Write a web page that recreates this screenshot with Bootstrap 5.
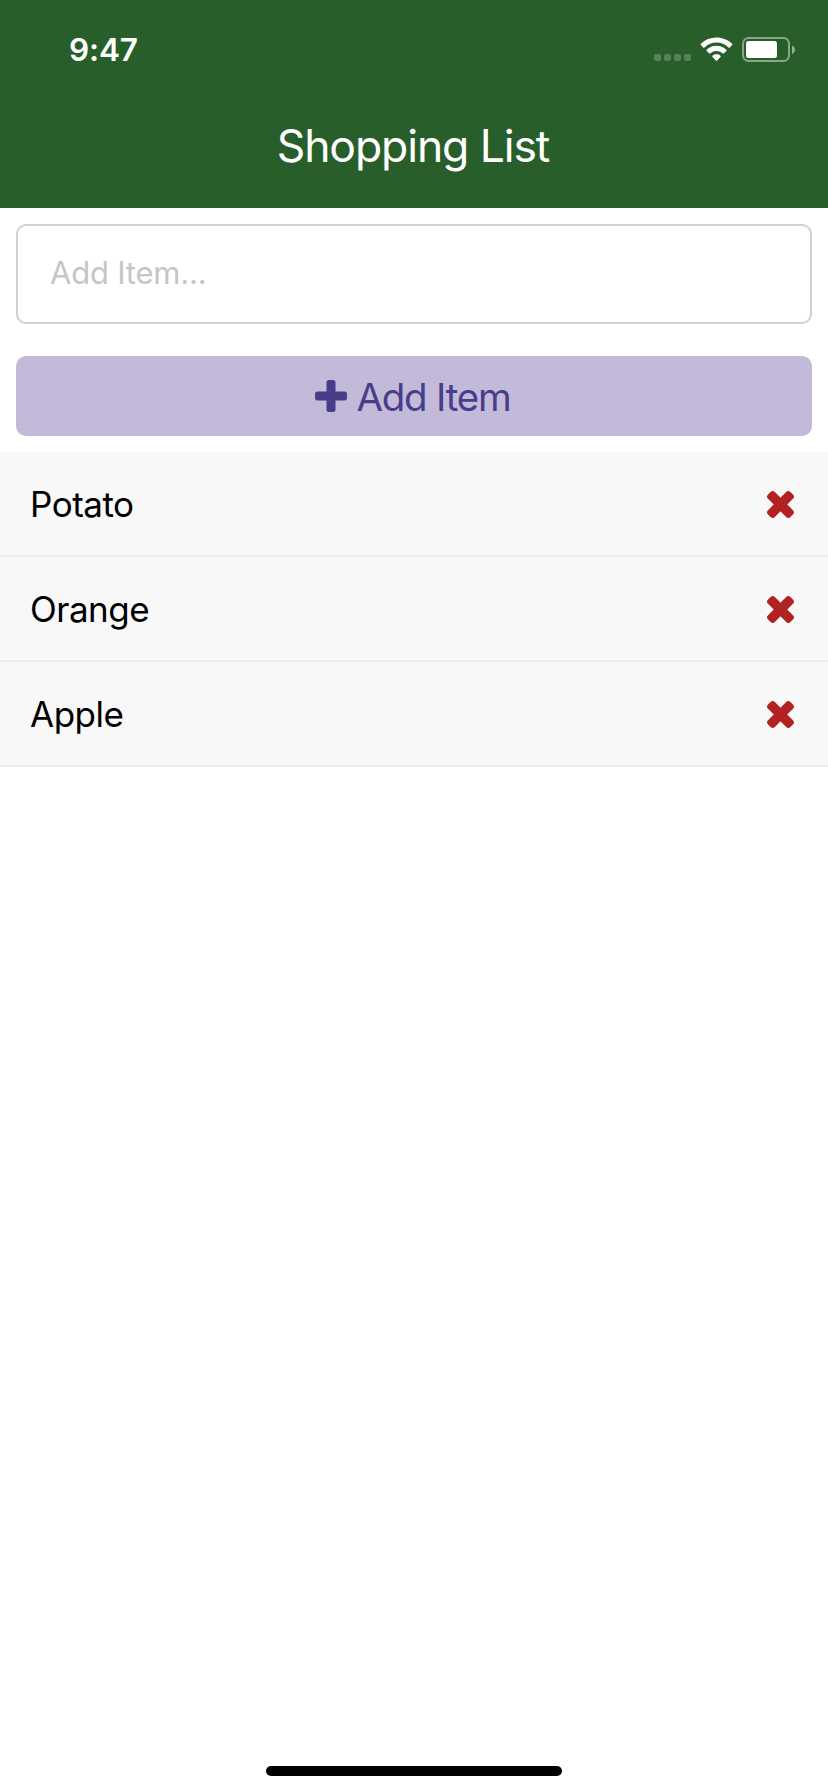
<!DOCTYPE html>
<html lang="en">
<head>
<meta charset="utf-8">
<meta name="viewport" content="width=device-width, initial-scale=1">
<title>Shopping List</title>
<link href="https://cdn.jsdelivr.net/npm/bootstrap@5.3.0/dist/css/bootstrap.min.css" rel="stylesheet">
<style>
body { font-family: Inter, "Liberation Sans", sans-serif; color: #000; background: #fff; }
.app-header { background: #285e2a; height: 208px; }
.status-bar { height: 88px; padding: 11px 32px 0 69px; }
.clock { font-size: 31.5px; font-weight: 600; letter-spacing: -.1px; line-height: 40px; }
.app-title { font-size: 44.5px; font-weight: 400; line-height: 60px; padding: 28px 2px 0 0; letter-spacing: -1.1px; }
.item-input { height: 100px; border: 2px solid #d0d0d0; border-radius: 10px; padding: 0 32px 3px; font-size: 31px; letter-spacing: -.2px; }
.item-input::placeholder { color: #c5c5c7; opacity: 1; }
.add-btn, .add-btn:hover { height: 80px; margin-top: 32px; border: 0; border-radius: 10px; background: #c2bad8; color: #483d8b; font-size: 38.5px; line-height: 80px; letter-spacing: -1.2px; }
.add-btn svg { margin-right: 9px; }
.add-btn span { padding: 2px 2px 0 0; }
.shop-item { height: 105px; background: #f8f8f8; border: 0; border-bottom: 2px solid #ededed !important; border-radius: 0 !important; padding: 0 34px 0 30px; font-size: 35px; letter-spacing: -.5px; color: #000; }
.shop-item span { padding-top: 2px; }
.remove-icon { color: #b22222; margin-top: 1px; }
.home-bar { width: 296px; height: 10px; border-radius: 5px; background: #000; margin-bottom: 16px; }
</style>
</head>
<body>
<svg class="d-none" aria-hidden="true">
  <symbol id="remove" viewBox="0 0 27 27"><g transform="rotate(45 13.500 13.500)"><rect x="-2.300" y="8.700" width="31.600" height="9.600" rx="3"/><rect x="8.700" y="-2.300" width="9.600" height="31.600" rx="3"/></g></symbol>
</svg>
<div class="d-flex flex-column vh-100">
  <header class="app-header text-white">
    <div class="status-bar d-flex justify-content-between align-items-center">
      <span class="clock">9:47</span>
      <svg width="143" height="26" viewBox="652 37 143 26" fill="#fff">
        <g opacity=".22"><rect x="653" y="54" width="7" height="7" rx="2"/><rect x="663" y="54" width="7" height="7" rx="2"/><rect x="673" y="54" width="7" height="7" rx="2"/><rect x="683" y="54" width="7" height="7" rx="2"/></g>
        <path d="M715.5 37.5c6 0 11.500 2.300 15.600 6.200.4.400.4.900 0 1.300l-2.300 2.400c-.4.400-.9.400-1.300 0a17.300 17.300 0 0 0-24 0c-.4.400-.9.400-1.300 0l-2.300-2.400c-.4-.4-.4-.9 0-1.300a22.500 22.500 0 0 1 15.600-6.200z"/>
        <path d="M715.5 45.800c3.800 0 7.200 1.500 9.800 3.900.4.400.4.900 0 1.300l-2.400 2.300c-.4.400-.9.400-1.300 0a9 9 0 0 0-12.200 0c-.4.400-.9.400-1.300 0l-2.400-2.300c-.4-.4-.4-.9 0-1.300a14.300 14.300 0 0 1 9.800-3.900z"/>
        <path d="M715.5 54.300c1.500 0 2.900.5 4 1.400.4.400.4.900 0 1.300l-3.400 3.600c-.4.400-.8.400-1.200 0l-3.400-3.600c-.4-.4-.4-.9 0-1.300 1.100-.9 2.500-1.400 4-1.400z"/>
        <rect x="742" y="38" width="46" height="23" rx="5.500" fill="none" stroke="#fff" stroke-width="2" opacity=".45"/>
        <rect x="745" y="41" width="31" height="17" rx="2.500"/>
        <path d="M791 45.500c4 1.800 4 6.700 0 8.500z" opacity=".5"/>
      </svg>
    </div>
    <h1 class="app-title text-center mb-0">Shopping List</h1>
  </header>

  <main class="flex-grow-1">
    <div class="p-3 d-flex flex-column">
      <input class="form-control item-input" type="text" placeholder="Add Item..." aria-label="Add item">
      <button class="btn add-btn d-flex justify-content-center align-items-center p-0" type="button">
        <svg width="32" height="32" viewBox="0 0 32 32" fill="currentColor" aria-hidden="true"><rect x="0" y="11.500" width="32" height="9" rx="2.500"/><rect x="11.500" y="0" width="9" height="32" rx="2.500"/></svg>
        <span>Add Item</span>
      </button>
    </div>
    <ul class="list-group list-group-flush">
      <li class="list-group-item shop-item d-flex justify-content-between align-items-center"><span>Potato</span><svg class="remove-icon" width="27" height="27" fill="currentColor"><use href="#remove"/></svg></li>
      <li class="list-group-item shop-item d-flex justify-content-between align-items-center"><span>Orange</span><svg class="remove-icon" width="27" height="27" fill="currentColor"><use href="#remove"/></svg></li>
      <li class="list-group-item shop-item d-flex justify-content-between align-items-center"><span>Apple</span><svg class="remove-icon" width="27" height="27" fill="currentColor"><use href="#remove"/></svg></li>
    </ul>
  </main>
  <div class="home-bar mx-auto"></div>
</div>
<script src="https://cdn.jsdelivr.net/npm/bootstrap@5.3.0/dist/js/bootstrap.bundle.min.js"></script>
</body>
</html>
